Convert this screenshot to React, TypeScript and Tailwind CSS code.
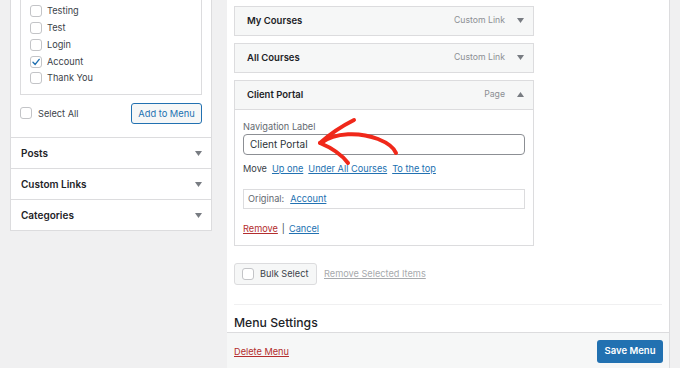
import React from "react";

const Caret = ({ up = false }: { up?: boolean }) => (
  <svg width="7" height="5" viewBox="0 0 7 5" className="shrink-0">
    <polygon points={up ? "0,5 7,5 3.5,0" : "0,0 7,0 3.5,5"} fill="#787c82" />
  </svg>
);

const Check = ({ checked = false }: { checked?: boolean }) => (
  <span className="w-[12px] h-[12px] rounded-[3px] border border-[#c3c4c7] bg-white flex items-center justify-center shrink-0">
    {checked && (
      <svg width="10" height="10" viewBox="0 0 10 10">
        <path d="M2 5.2 L4.2 7.4 L8.2 2.4" fill="none" stroke="#2271b1" strokeWidth="1.4" strokeLinecap="round" strokeLinejoin="round" />
      </svg>
    )}
  </span>
);

const pages = [
  { label: "Testing" },
  { label: "Test" },
  { label: "Login" },
  { label: "Account", checked: true },
  { label: "Thank You" },
];

const MenuItem = ({ title, type, open = false }: { title: string; type: string; open?: boolean }) => (
  <div className="h-[30px] flex items-center justify-between pl-[12px] pr-[9px] bg-[#f6f7f7] border border-[#dcdcde]">
    <span className="text-[9.5px] font-semibold text-[#1d2327]">{title}</span>
    <div className="flex items-center gap-[12px]">
      <span className="text-[8.7px] text-[#8c8f94]">{type}</span>
      <Caret up={open} />
    </div>
  </div>
);

export default function App() {
  return (
    <div className="relative w-[680px] h-[368px] overflow-hidden bg-[#f0f0f1] flex text-[9.2px] text-[#3c434a] font-['Inter','Liberation_Sans',sans-serif]">
      {/* left: add menu items */}
      <div className="w-[227px] shrink-0 pl-[10px]">
        <div className="w-[202px] bg-white border border-t-0 border-[#dcdcde]">
          <div className="px-[9px]">
            <div className="border border-t-0 border-[#dcdcde] pl-[9px] pt-[3px] h-[95px]">
              {pages.map((p) => (
                <div key={p.label} className="h-[16.75px] flex items-center gap-[5px]">
                  <Check checked={p.checked} />
                  <span>{p.label}</span>
                </div>
              ))}
            </div>
            <div className="flex items-center justify-between pt-[8px] pb-[13px]">
              <div className="flex items-center gap-[6px]">
                <Check />
                <span>Select All</span>
              </div>
              <button className="h-[21px] w-[71px] rounded-[3px] border border-[#2271b1] bg-[#f6f7f7] text-[#2271b1] text-[9.3px]">
                Add to Menu
              </button>
            </div>
          </div>
          {["Posts", "Custom Links", "Categories"].map((s) => (
            <div key={s} className="h-[31px] border-t border-[#dcdcde] flex items-center justify-between pl-[10px] pr-[9px]">
              <span className="text-[10px] font-semibold text-[#1d2327]">{s}</span>
              <Caret />
            </div>
          ))}
        </div>
      </div>

      {/* right: menu structure */}
      <div className="w-[443px] shrink-0 bg-white border-r border-[#dcdcde] flex flex-col">
        <div className="flex-1 px-[7px] pt-[6px]">
          <div className="w-[300px] flex flex-col gap-[7px]">
            <MenuItem title="My Courses" type="Custom Link" />
            <MenuItem title="All Courses" type="Custom Link" />
            <div>
              <MenuItem title="Client Portal" type="Page" open />
              <div className="h-[136px] border border-t-0 border-[#dcdcde] px-[8px] pt-[11px]">
                <div className="text-[#646970] leading-[12px]">Navigation Label</div>
                <div className="mt-[1px] h-[21px] rounded-[4px] border border-[#8c8f94] flex items-center px-[6px] text-[10px] text-[#2c3338]">
                  Client Portal
                </div>
                <div className="mt-[8px] flex items-center gap-[5px] leading-[12px]">
                  <span>Move</span>
                  <span className="text-[#2271b1] underline">Up one</span>
                  <span className="text-[#2271b1] underline">Under All Courses</span>
                  <span className="text-[#2271b1] underline">To the top</span>
                </div>
                <div className="mt-[14px] h-[20px] border border-[#dcdcde] flex items-center px-[4px] gap-[6px]">
                  <span className="text-[#646970]">Original:</span>
                  <span className="text-[#2271b1] underline">Account</span>
                </div>
                <div className="mt-[14px] flex items-center gap-[4px] leading-[12px]">
                  <span className="text-[#b32d2e] underline">Remove</span>
                  <span>|</span>
                  <span className="text-[#2271b1] underline">Cancel</span>
                </div>
              </div>
            </div>
          </div>

          <div className="mt-[17px] flex items-center gap-[7px]">
            <div className="h-[22px] w-[83px] rounded-[3px] border border-[#dcdcde] bg-[#f6f7f7] flex items-center gap-[6px] pl-[7px]">
              <Check />
              <span>Bulk Select</span>
            </div>
            <span className="text-[#a7aaad] underline">Remove Selected Items</span>
          </div>

          <div className="mt-[19px] border-t border-[#f0f0f1]" />
          <div className="mt-[10px] text-[12.2px] font-medium text-[#1d2327] leading-[16px]">Menu Settings</div>
        </div>

        <div className="h-[36px] shrink-0 bg-[#f6f7f7] border-t border-[#dcdcde] flex items-start justify-between pl-[7px] pr-[6px] pt-[7px]">
          <span className="mt-[5px] text-[#b32d2e] underline">Delete Menu</span>
          <button className="h-[23px] w-[66px] rounded-[3px] bg-[#2271b1] text-white text-[9.5px] font-semibold">
            Save Menu
          </button>
        </div>
      </div>

      {/* red annotation arrow */}
      <svg className="absolute inset-0 pointer-events-none" width="680" height="368" viewBox="0 0 680 368">
        <g fill="none" stroke="#f0281a" strokeWidth="4" strokeLinecap="round" strokeLinejoin="round">
          <path d="M321 143 C 335 132, 360 132, 378 139 C 388 143, 394 148, 396 153" />
          <path d="M320 143 C 330 134, 342 126, 354 120" />
          <path d="M320 143 C 332 148, 342 155, 348 163" />
        </g>
      </svg>
    </div>
  );
}
